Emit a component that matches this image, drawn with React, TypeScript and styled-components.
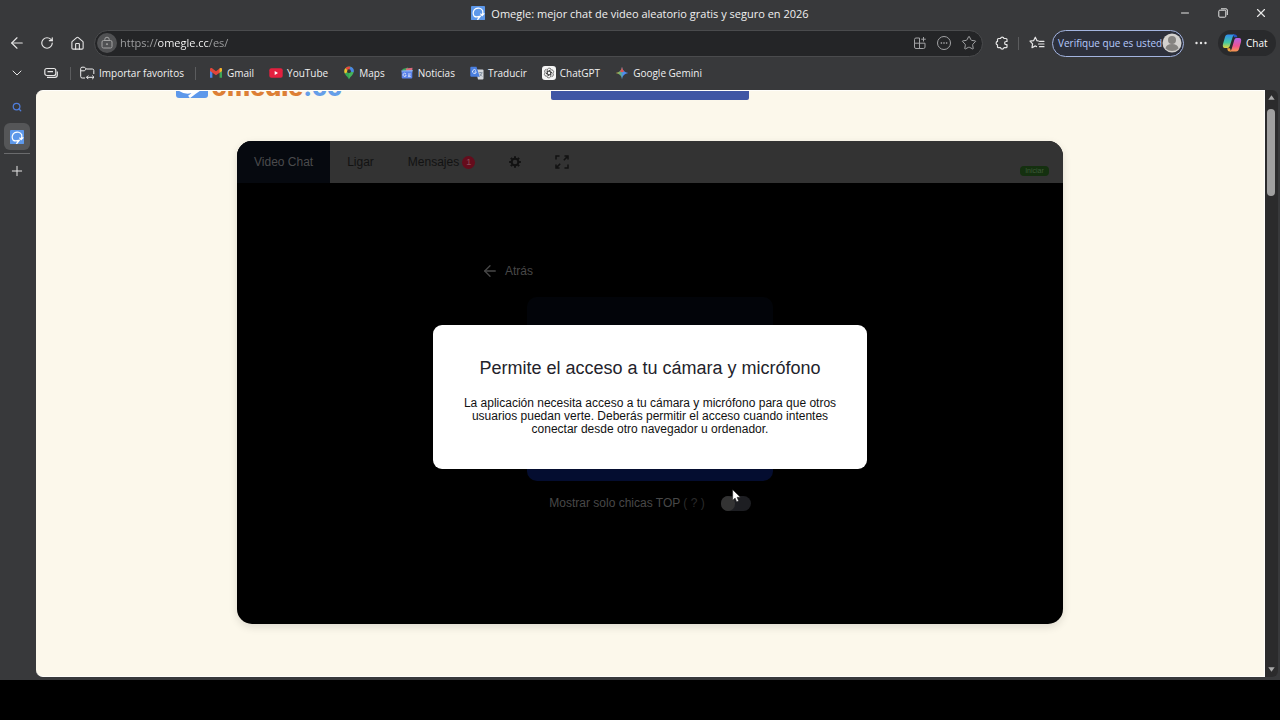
import React from 'react';
import styled, { createGlobalStyle } from 'styled-components';
import {
  ArrowLeft,
  ChevronDown,
  House,
  Minus,
  Plus,
  RotateCw,
  Search,
  Star,
  X,
} from 'lucide-react';

const ui = "'Open Sans', 'Noto Sans', sans-serif";
const web = "'Liberation Sans', Arial, sans-serif";

const GlobalStyle = createGlobalStyle`
  * { box-sizing: border-box; }
  body { margin: 0; background: #000; }
  button, input { font: inherit; color: inherit; margin: 0; }
  svg { display: block; flex: none; }
`;

const Desktop = styled.div`
  display: flex;
  flex-direction: column;
  height: 100vh;
  background: #000;
`;

const Browser = styled.div`
  flex: 1;
  min-height: 0;
  display: flex;
  flex-direction: column;
  background: #38393b;
  color: #f0f0f0;
  font-family: ${ui};
  font-size: 10px;
`;

const Taskbar = styled.footer`
  height: 40px;
  background: #000;
`;

const TitleBar = styled.header`
  display: grid;
  grid-template-columns: 1fr auto 1fr;
  align-items: center;
  height: 28px;
  padding-bottom: 2px;
`;

const WindowTitle = styled.div`
  grid-column: 2;
  display: flex;
  align-items: center;
  gap: 6px;
  font-size: 11px;
  white-space: nowrap;
`;

const WindowButtons = styled.div`
  display: flex;
  justify-content: flex-end;
`;

const IconButton = styled.button<{ $w?: number; $h?: number; $tone?: string }>`
  display: flex;
  flex: none;
  align-items: center;
  justify-content: center;
  width: ${(p) => p.$w ?? 30}px;
  height: ${(p) => p.$h ?? 26}px;
  padding: 0;
  border: 0;
  background: none;
  color: ${(p) => p.$tone ?? '#e6e6e6'};
`;

const Toolbar = styled.nav`
  display: flex;
  align-items: center;
  height: 30px;
  padding: 0 4px 0 2px;
`;

const AddressBar = styled.form`
  flex: 1;
  display: flex;
  align-items: center;
  height: 27px;
  margin: 0 4px 0 2px;
  padding: 0 0 0 2px;
  border: 1px solid #4a4b4d;
  border-radius: 14px;
  background: #242527;
`;

const SiteInfo = styled.button`
  display: flex;
  flex: none;
  align-items: center;
  justify-content: center;
  width: 20px;
  height: 20px;
  padding: 0;
  border: 0;
  border-radius: 50%;
  background: #505153;
  color: #a4a4a4;
`;

const AddressInput = styled.input`
  flex: 1;
  min-width: 0;
  padding: 0 0 0 3px;
  border: 0;
  outline: 0;
  font-size: 11px;
  line-height: 16px;
  color: transparent;
  background: linear-gradient(90deg, #a2a3a5 0 40px, #fff 40px 92px, #a2a3a5 92px);
  -webkit-background-clip: text;
  background-clip: text;
`;

const Divider = styled.span<{ $before: number; $after: number }>`
  flex: none;
  width: 1px;
  height: 13px;
  margin: 0 ${(p) => p.$after}px 0 ${(p) => p.$before}px;
  background: #5b5c5e;
`;

const ProfileButton = styled.button`
  display: flex;
  flex: none;
  align-items: center;
  justify-content: space-between;
  width: 132px;
  height: 27px;
  padding: 0 1px 0 5px;
  border: 1px solid #a3b4e0;
  border-radius: 14px;
  background: #2d303b;
  color: #b5c9fb;
  white-space: nowrap;
`;

const ChatButton = styled.button`
  display: flex;
  flex: none;
  align-items: center;
  gap: 4px;
  width: 58px;
  height: 26px;
  padding: 0 4px;
  border: 0;
  border-radius: 13px;
  background: #292a2c;
  color: #fff;
`;

const FavoritesBar = styled.nav`
  display: flex;
  align-items: center;
  height: 32px;
  padding: 0 0 2px 2px;
`;

const FavoriteList = styled.ul`
  display: flex;
  gap: 15px;
  margin: 0;
  padding: 0;
  list-style: none;
`;

const Favorite = styled.a`
  display: flex;
  align-items: center;
  gap: 4px;
  color: #f0f0f0;
  text-decoration: none;
  white-space: nowrap;
`;

const Workspace = styled.div`
  flex: 1;
  min-height: 0;
  display: flex;
  padding: 0 2px 3px 0;
`;

const TabRail = styled.aside`
  display: flex;
  flex-direction: column;
  align-items: center;
  gap: 3px;
  width: 36px;
  padding: 4px 5px 0 2px;
`;

const ActiveTab = styled.button`
  display: flex;
  align-items: center;
  justify-content: center;
  width: 26px;
  height: 27px;
  padding: 0;
  border: 0;
  border-radius: 6px;
  background: #555658;
`;

const RailLine = styled.span`
  width: 26px;
  height: 1px;
  background: #6a6b6d;
`;

const Viewport = styled.main`
  flex: 1;
  min-width: 0;
  overflow: hidden;
  border: 1px solid #fffefa;
  border-left: 0;
  border-radius: 7px 0 0 7px;
  background: #fcf8eb;
  color: #111;
  font-family: ${web};
  font-size: 12px;
`;

const ScrollTrack = styled.div`
  display: flex;
  flex-direction: column;
  align-items: center;
  justify-content: space-between;
  width: 13px;
  padding: 5px 1px 5px 0;
  border-radius: 0 6px 6px 0;
  background: #2b2b2c;
`;

const ScrollThumb = styled.div`
  width: 8px;
  height: 87px;
  margin: 9px 0 auto;
  border-radius: 4px;
  background: #a0a0a0;
`;

const SiteHeader = styled.header`
  display: grid;
  grid-template-columns: 1fr auto 1fr;
  align-items: end;
  max-width: 949px;
  height: 40px;
  margin: -31px auto 0;
`;

const Logo = styled.a`
  display: flex;
  align-items: flex-end;
  gap: 4px;
  height: 40px;
  padding-bottom: 2px;
  color: #dd7f35;
  text-decoration: none;
`;

const Wordmark = styled.span`
  height: 25px;
  margin-bottom: 2px;
  overflow: hidden;
  font: 800 25px/32px Inter, sans-serif;

  em { font-style: normal; color: #659ee8; }
`;

const HeaderButton = styled.button`
  width: 198px;
  height: 40px;
  padding: 0;
  border: 0;
  border-radius: 2px;
  background: #3f56a4;
`;

const VideoCard = styled.section`
  position: relative;
  max-width: 826px;
  margin: 41px auto 0;
  overflow: hidden;
  border-radius: 15px;
  background: #000;
  color: #484848;
  box-shadow: 0 3px 8px rgba(0, 0, 0, 0.12);
`;

const CardTabs = styled.div`
  display: flex;
  height: 42px;
  background: #333;
`;

const CardTab = styled.button<{ $active?: boolean }>`
  display: flex;
  align-items: center;
  gap: 3px;
  padding: 0 17px;
  border: 0;
  background: ${(p) => (p.$active ? '#06090f' : 'transparent')};
  color: ${(p) => (p.$active ? '#4b4b4d' : '#121212')};
`;

const Count = styled.span`
  width: 13px;
  border-radius: 50%;
  background: #650c1c;
  color: #8c5059;
  font-size: 9px;
  line-height: 13px;
  text-align: center;
`;

const StartBadge = styled.span`
  align-self: flex-end;
  width: 29px;
  margin: 0 14px 7px auto;
  border-radius: 4px;
  background: #14300f;
  color: #3f5a3a;
  font-size: 7px;
  line-height: 10px;
  text-align: center;
`;

const Stage = styled.div`
  display: flex;
  flex-direction: column;
  align-items: center;
  height: 441px;
  padding-top: 80px;
`;

const BackRow = styled.div`
  display: flex;
  width: 338px;
`;

const BackButton = styled.button`
  display: flex;
  align-items: center;
  gap: 6px;
  height: 16px;
  padding: 0;
  border: 0;
  background: none;
`;

const StartPanel = styled.div`
  width: 246px;
  height: 184px;
  margin: 18px 0 14px;
  border-radius: 10px;
  background: linear-gradient(#020409 0 60%, #040d30 85%);
`;

const TopOnly = styled.label`
  display: flex;
  align-items: center;
  height: 16px;
  white-space: pre;

  span { color: #2b2b2b; }
`;

const Switch = styled.input`
  appearance: none;
  width: 30px;
  height: 15px;
  margin-left: 16px;
  border-radius: 8px;
  background: #1d1e22;

  &::before {
    content: '';
    display: block;
    width: 14px;
    height: 15px;
    border-radius: 8px;
    background: #333;
  }
`;

const Dialog = styled.div`
  position: absolute;
  top: 184px;
  left: 50%;
  width: 434px;
  padding: 33px 30px;
  transform: translateX(-50%);
  border-radius: 9px;
  background: #fff;
  color: #111;
  text-align: center;

  h2 {
    margin: 0 0 19px;
    color: #23232b;
    font-size: 18px;
    font-weight: 400;
    line-height: 20px;
  }

  p { margin: 0; line-height: 13px; }
`;

const Pointer = styled.svg`
  position: absolute;
  top: 348px;
  left: calc(50% + 82px);
`;

function OmegleMark({ size = 14 }: { size?: number }) {
  return (
    <svg width={size} height={size} viewBox="0 0 16 16">
      <rect width="16" height="16" rx="1" fill="#5d98ea" />
      <path d="M3.500 11.500A5.800 5.800 0 1 1 13.400 5.500C13.800 7.500 13.600 8.600 13 10M15.300 8.400 12.800 11 10.800 8.600" fill="none" stroke="#fff" strokeWidth="1.400" />
      <path d="M3.500 11.500C6 13.200 8 12.400 10.400 11.800L7.300 15.800" fill="none" stroke="#fff" strokeWidth="1.600" />
    </svg>
  );
}

const LockIcon = () => (
  <svg width="14" height="14" viewBox="0 0 14 14" fill="none" stroke="currentColor">
    <rect x="2" y="4.500" width="10" height="7.500" rx="1.500" />
    <path d="M4.800 4.500V3.400a2.200 2.200 0 0 1 4.400 0v1.100" />
    <circle cx="7" cy="8.200" r=".6" fill="currentColor" />
  </svg>
);

const AppsIcon = () => (
  <svg width="14" height="14" viewBox="0 0 14 14" fill="none" stroke="currentColor">
    <path d="M6.500 2H3a1.500 1.500 0 0 0-1.500 1.500V11A1.500 1.500 0 0 0 3 12.500h7.500A1.500 1.500 0 0 0 12 11V7.200H1.500M6.500 2v10.500M10.500 1v4.500M8.200 3.200h4.600" />
  </svg>
);

const CircleDots = () => (
  <svg width="16" height="16" viewBox="0 0 16 16" fill="none" stroke="currentColor">
    <circle cx="8" cy="8" r="6.500" />
    <path d="M4.700 8h1.400M7.300 8h1.400M9.900 8h1.400" strokeWidth="1.500" />
  </svg>
);

const PuzzleIcon = () => (
  <svg width="16" height="16" viewBox="0 0 16 16" fill="none" stroke="currentColor" strokeWidth="1.200" strokeLinejoin="round">
    <path d="M4.500 3.500h2a1.800 1.800 0 0 1 3.500 0h2a1 1 0 0 1 1 1v2h-.8a1.600 1.600 0 0 0 0 3.200h.8v2a1 1 0 0 1-1 1h-2a1.800 1.800 0 0 1-3.500 0h-2a1 1 0 0 1-1-1V9.900a1.800 1.800 0 0 1 0-3.500V4.500a1 1 0 0 1 1-1z" />
  </svg>
);

const FavoritesIcon = () => (
  <svg width="16" height="16" viewBox="0 0 16 16" fill="none" stroke="currentColor" strokeWidth="1.200" strokeLinejoin="round" strokeLinecap="round">
    <path d="M9.500 6 8 5.700 6.300 2.200 4.600 5.700 1 6.200l2.600 2.600L3 12.700l3.300-1.800 1.200.7M10.500 6.300H15M9.500 9H15M10.500 11.700H15" />
  </svg>
);

const Dots = () => (
  <svg width="12" height="12" viewBox="0 0 12 12" fill="currentColor">
    <circle cx="1.500" cy="6" r="1.200" />
    <circle cx="6" cy="6" r="1.200" />
    <circle cx="10.500" cy="6" r="1.200" />
  </svg>
);

const Avatar = () => (
  <svg width="20" height="20" viewBox="0 0 20 20">
    <circle cx="10" cy="10" r="9.500" fill="#d3d1ce" />
    <circle cx="10" cy="7" r="4" fill="#858380" />
    <path d="M3.500 15.500a6.500 4.500 0 0 1 13 0 9.500 9.500 0 0 1-13 0" fill="#858380" />
  </svg>
);

const CopilotIcon = () => (
  <svg width="20" height="20" viewBox="0 0 20 20">
    <defs>
      <linearGradient id="cpA" x1="0" y1="0" x2="0" y2="1">
        <stop offset="0" stopColor="#2f8df0" />
        <stop offset=".6" stopColor="#45c9a0" />
        <stop offset="1" stopColor="#e6d43c" />
      </linearGradient>
      <linearGradient id="cpB" x1="0" y1="0" x2="0" y2="1">
        <stop offset="0" stopColor="#b362e8" />
        <stop offset=".6" stopColor="#ee5490" />
        <stop offset="1" stopColor="#f79a4d" />
      </linearGradient>
    </defs>
    <path d="M11 1.500h2c1.500 0 1.900 1 2.300 2.800H12z" fill="#2456c8" />
    <path d="M6 1.500h6.500c-1 .4-1.500 1.500-2 3L7.800 13c-.4 1.200-1 2-2.300 2H3C.8 15 .5 13 1 11L3 4c.5-1.500 1.200-2.500 3-2.500" fill="url(#cpA)" />
    <path d="M9 18.500H7.500c-1.500 0-1.900-1-2.300-3.300H8z" fill="#f0a23c" />
    <path d="M14 18.500H7.800c1-.4 1.500-1.500 2-3L12.300 7c.4-1.200 1-2 2.300-2H17c2.200 0 2.500 2 2 4l-2 7c-.5 1.500-1.200 2.500-3 2.500" fill="url(#cpB)" />
  </svg>
);

const RestoreIcon = () => (
  <svg width="10" height="10" viewBox="0 0 10 10" fill="none" stroke="currentColor">
    <rect x=".8" y="2.200" width="7" height="7" rx="1" />
    <path d="M3 .8h5A1.300 1.300 0 0 1 9.300 2v5" />
  </svg>
);

const TabStackIcon = () => (
  <svg width="14" height="12" viewBox="0 0 14 12" fill="none" stroke="currentColor" strokeWidth="1.200">
    <rect x=".8" y="1.500" width="11" height="7" rx="2" />
    <path d="M3.500 4.700h5.500M3 10.400h8a2.300 2.300 0 0 0 2.300-2.300V4.500" />
  </svg>
);

const ImportIcon = () => (
  <svg width="15" height="14" viewBox="0 0 15 14" fill="none" stroke="currentColor" strokeLinejoin="round">
    <path d="M5 12H2.200A1.500 1.500 0 0 1 .7 10.500V2.500A1.400 1.400 0 0 1 2 1.200h2.500L6.300 3h6A1.500 1.500 0 0 1 13.800 4.500V8M.7 4.800h3.600L6.300 3" />
    <path d="M6.500 11.300h7.500M8.300 9.500l-1.800 1.800 1.800 1.800M12.200 9.500l1.800 1.800-1.800 1.800" />
  </svg>
);

const GmailIcon = () => (
  <svg width="14" height="14" viewBox="0 0 14 14">
    <path d="M1 3.500v8.300h2.400V6" fill="#4a86e8" />
    <path d="M13 3.500v8.300h-2.400V6" fill="#3da556" />
    <path d="M1 5V3.300C1 2 2.500 1.700 3.400 2.400L7 5.200l3.600-2.800C11.500 1.700 13 2 13 3.300V5L7 9.300z" fill="#e0453a" />
    <path d="M10.600 2.400C11.500 1.700 13 2 13 3.300V5l-2.400 1.700z" fill="#efb92d" />
  </svg>
);

const YouTubeIcon = () => (
  <svg width="14" height="14" viewBox="0 0 14 14">
    <rect x=".3" y="2.300" width="13.400" height="9.400" rx="2" fill="#e3203f" />
    <path d="M5.700 5v4L9 7z" fill="#fff" />
  </svg>
);

const MapsIcon = () => (
  <svg width="12" height="14" viewBox="0 0 12 14">
    <path d="M6 13.500C5.500 11 1.300 9 1.300 5.200A4.700 4.700 0 0 1 6 .5z" fill="#35a853" />
    <path d="M6 .5a4.700 4.700 0 0 1 4.700 4.700C10.700 9 6.500 11 6 13.500z" fill="#43b25b" />
    <path d="M6 5.200 2.300 2.300A4.700 4.700 0 0 1 7.500.7z" fill="#e8453c" />
    <path d="M6 5.200 7.500.7a4.700 4.700 0 0 1 3.100 5.500z" fill="#4a86e8" />
    <path d="M6 5.200 2.300 2.300c-1.200 1.500-1.300 3.500-.4 5.200z" fill="#f2bc2e" />
    <circle cx="6" cy="5.200" r="1.900" fill="#333436" />
  </svg>
);

const NewsIcon = () => (
  <svg width="14" height="14" viewBox="0 0 14 14">
    <path d="M2.500 3 8 1.500l1 4H2.500z" fill="#3fa95c" />
    <path d="m6 2.500 6.500-.8-.5 4H6z" fill="#d96a7c" />
    <path d="m1.200 4.500 11.600-.6-.8 3H2z" fill="#8fb5f5" />
    <rect x="1.700" y="5.500" width="10.600" height="7" rx="1" fill="#5b83ea" />
    <path d="M6 8A1.600 1.600 0 1 0 6.200 9.200H4.900M8 8h2.800M8 9.300h2.300M8 10.600h2.800" fill="none" stroke="#dfe8fd" strokeWidth=".8" />
  </svg>
);

const TranslateIcon = () => (
  <svg width="14" height="14" viewBox="0 0 14 14">
    <path d="M5.500 3.500h7a1 1 0 0 1 1 1V12.500a1 1 0 0 1-1 1H8z" fill="#d5d8dc" />
    <path d="M1.300.7H6.500l3.200 10H1.300a1 1 0 0 1-1-1v-8a1 1 0 0 1 1-1" fill="#4a7fe0" />
    <path d="M6 4.500A1.900 1.900 0 1 0 6.300 5.900H4.600" fill="none" stroke="#e6eefd" strokeWidth=".9" />
    <path d="M8.800 6.700h3.700M10.600 6v.7M12 6.800c-.4 1.600-1.400 2.700-2.600 3.500M9.700 8l2.500 2.500" fill="none" stroke="#68788c" strokeWidth=".7" />
  </svg>
);

const ChatGptIcon = () => (
  <svg width="14" height="14" viewBox="0 0 14 14">
    <rect width="14" height="14" rx="3" fill="#f5f5f5" />
    <g fill="none" stroke="#2e2e2e" strokeWidth=".6">
      {[0, 60, 120, 180, 240, 300].map((a) => (
        <path key={a} transform={`rotate(${a} 7 7)`} d="M5.200 8V4.200a2.100 2.100 0 0 1 3.800-1.200M5.200 6l3-1.700" />
      ))}
    </g>
  </svg>
);

const GeminiIcon = () => (
  <svg width="14" height="14" viewBox="0 0 14 14">
    <defs>
      <linearGradient id="gem" x1="0" y1=".5" x2="1" y2=".5">
        <stop offset="0" stopColor="#e9b93c" />
        <stop offset=".35" stopColor="#63b077" />
        <stop offset=".6" stopColor="#4d8cf0" />
        <stop offset="1" stopColor="#4d8cf0" />
      </linearGradient>
    </defs>
    <path d="M7 .8C7.500 4.500 9.500 6.500 13.200 7 9.500 7.500 7.500 9.500 7 13.200 6.500 9.500 4.500 7.500.8 7 4.500 6.500 6.500 4.500 7 .8" fill="url(#gem)" />
    <path d="M7 .8c.3 2 1 3.600 2.200 4.700L7 6.300 4.800 5.500C6 4.400 6.700 2.800 7 .8" fill="#e0524d" />
  </svg>
);

const GearIcon = () => (
  <svg width="12" height="12" viewBox="0 0 14 14" fill="none" stroke="currentColor">
    <circle cx="7" cy="7" r="3.900" strokeWidth="2.400" />
    {[0, 45, 90, 135, 180, 225, 270, 315].map((a) => (
      <path key={a} transform={`rotate(${a} 7 7)`} d="M7 .2v2.200" strokeWidth="2.400" />
    ))}
  </svg>
);

const ExpandIcon = () => (
  <svg width="14" height="14" viewBox="0 0 14 14" fill="none" stroke="currentColor" strokeWidth="1.500">
    <path d="M1 4.500V1h3.500M9.500 1H13v3.500M13 9.500V13H9.500M4.500 13H1V9.500M12.600 1.400 8.800 5.200M1.400 12.600l3.800-3.800" />
  </svg>
);

const Arrow = ({ down }: { down?: boolean }) => (
  <svg width="7" height="5" viewBox="0 0 7 5" fill="#a8a8a8">
    <path d={down ? 'M.3.3h6.400L3.500 4.800z' : 'M.3 4.700h6.400L3.500.2z'} />
  </svg>
);

const LogoMark = () => (
  <svg width="32" height="34" viewBox="0 0 32 34">
    <rect width="32" height="34" rx="3" fill="#5d98ea" />
    <path d="M3 25c5 4 11 4 17 1l4-1c-3 2-7 5-11 8" fill="none" stroke="#fff" strokeWidth="3" />
  </svg>
);

const favorites = [
  { name: 'Gmail', icon: <GmailIcon /> },
  { name: 'YouTube', icon: <YouTubeIcon /> },
  { name: 'Maps', icon: <MapsIcon /> },
  { name: 'Noticias', icon: <NewsIcon /> },
  { name: 'Traducir', icon: <TranslateIcon /> },
  { name: 'ChatGPT', icon: <ChatGptIcon /> },
  { name: 'Google Gemini', icon: <GeminiIcon /> },
];

export default function App() {
  return (
    <Desktop>
      <GlobalStyle />
      <Browser>
        <TitleBar>
          <WindowTitle>
            <OmegleMark />
            Omegle: mejor chat de video aleatorio gratis y seguro en 2026
          </WindowTitle>
          <WindowButtons>
            <IconButton $w={38} aria-label="Minimizar"><Minus size={12} strokeWidth={2} /></IconButton>
            <IconButton $w={38} aria-label="Restaurar"><RestoreIcon /></IconButton>
            <IconButton $w={38} aria-label="Cerrar"><X size={14} strokeWidth={2} /></IconButton>
          </WindowButtons>
        </TitleBar>

        <Toolbar>
          <IconButton aria-label="Volver"><ArrowLeft size={18} strokeWidth={1.5} /></IconButton>
          <IconButton aria-label="Actualizar"><RotateCw size={14} strokeWidth={2} /></IconButton>
          <IconButton aria-label="Inicio"><House size={15} strokeWidth={1.75} /></IconButton>
          <AddressBar>
            <SiteInfo type="button" aria-label="Información del sitio"><LockIcon /></SiteInfo>
            <AddressInput aria-label="Dirección" defaultValue="https://omegle.cc/es/" />
            <IconButton type="button" $w={24} $tone="#a2a3a5" aria-label="Aplicaciones"><AppsIcon /></IconButton>
            <IconButton type="button" $w={24} $tone="#a2a3a5" aria-label="Más acciones"><CircleDots /></IconButton>
            <IconButton type="button" $w={26} $tone="#a2a3a5" aria-label="Agregar a favoritos"><Star size={16} strokeWidth={1.5} /></IconButton>
          </AddressBar>
          <IconButton aria-label="Extensiones"><PuzzleIcon /></IconButton>
          <Divider $before={1} $after={3} />
          <IconButton aria-label="Favoritos"><FavoritesIcon /></IconButton>
          <ProfileButton>
            Verifique que es usted
            <Avatar />
          </ProfileButton>
          <IconButton $w={34} aria-label="Configuración y más"><Dots /></IconButton>
          <ChatButton>
            <CopilotIcon />
            Chat
          </ChatButton>
        </Toolbar>

        <FavoritesBar>
          <IconButton aria-label="Pestañas"><ChevronDown size={16} strokeWidth={1.5} /></IconButton>
          <IconButton $w={38} aria-label="Panel de pestañas"><TabStackIcon /></IconButton>
          <Divider $before={0} $after={9} />
          <Favorite href="#importar"><ImportIcon />Importar favoritos</Favorite>
          <Divider $before={11} $after={13} />
          <FavoriteList>
            {favorites.map((f) => (
              <li key={f.name}>
                <Favorite href={`#${f.name}`}>{f.icon}{f.name}</Favorite>
              </li>
            ))}
          </FavoriteList>
        </FavoritesBar>

        <Workspace>
          <TabRail>
            <IconButton $tone="#4f7ddb" aria-label="Buscar"><Search size={10} strokeWidth={3} /></IconButton>
            <ActiveTab aria-label="Omegle"><OmegleMark /></ActiveTab>
            <RailLine />
            <IconButton $h={28} aria-label="Nueva pestaña"><Plus size={16} strokeWidth={1.5} /></IconButton>
          </TabRail>

          <Viewport>
            <SiteHeader>
              <Logo href="#inicio">
                <LogoMark />
                <Wordmark>omegle<em>.cc</em></Wordmark>
              </Logo>
              <HeaderButton aria-label="Iniciar chat" />
            </SiteHeader>

            <VideoCard>
              <CardTabs>
                <CardTab $active>Video Chat</CardTab>
                <CardTab>Ligar</CardTab>
                <CardTab>Mensajes<Count>1</Count></CardTab>
                <CardTab aria-label="Ajustes"><GearIcon /></CardTab>
                <CardTab aria-label="Pantalla completa"><ExpandIcon /></CardTab>
                <StartBadge>Iniciar</StartBadge>
              </CardTabs>
              <Stage>
                <BackRow>
                  <BackButton><ArrowLeft size={18} strokeWidth={1.75} />Atrás</BackButton>
                </BackRow>
                <StartPanel />
                <TopOnly>
                  Mostrar solo chicas TOP <span>( ? )</span>
                  <Switch type="checkbox" />
                </TopOnly>
              </Stage>
              <Dialog role="dialog" aria-labelledby="permiso">
                <h2 id="permiso">Permite el acceso a tu cámara y micrófono</h2>
                <p>
                  La aplicación necesita acceso a tu cámara y micrófono para que otros usuarios
                  puedan verte. Deberás permitir el acceso cuando intentes conectar desde otro
                  navegador u ordenador.
                </p>
              </Dialog>
              <Pointer width="9" height="14" viewBox="0 0 9 14">
                <path d="M.7.7v10.600L3.100 9l1.600 3.800 1.900-.8L5 8.300h3.300z" fill="#fff" stroke="#222" strokeWidth=".5" />
              </Pointer>
            </VideoCard>
          </Viewport>

          <ScrollTrack>
            <Arrow />
            <ScrollThumb />
            <Arrow down />
          </ScrollTrack>
        </Workspace>
      </Browser>
      <Taskbar />
    </Desktop>
  );
}
